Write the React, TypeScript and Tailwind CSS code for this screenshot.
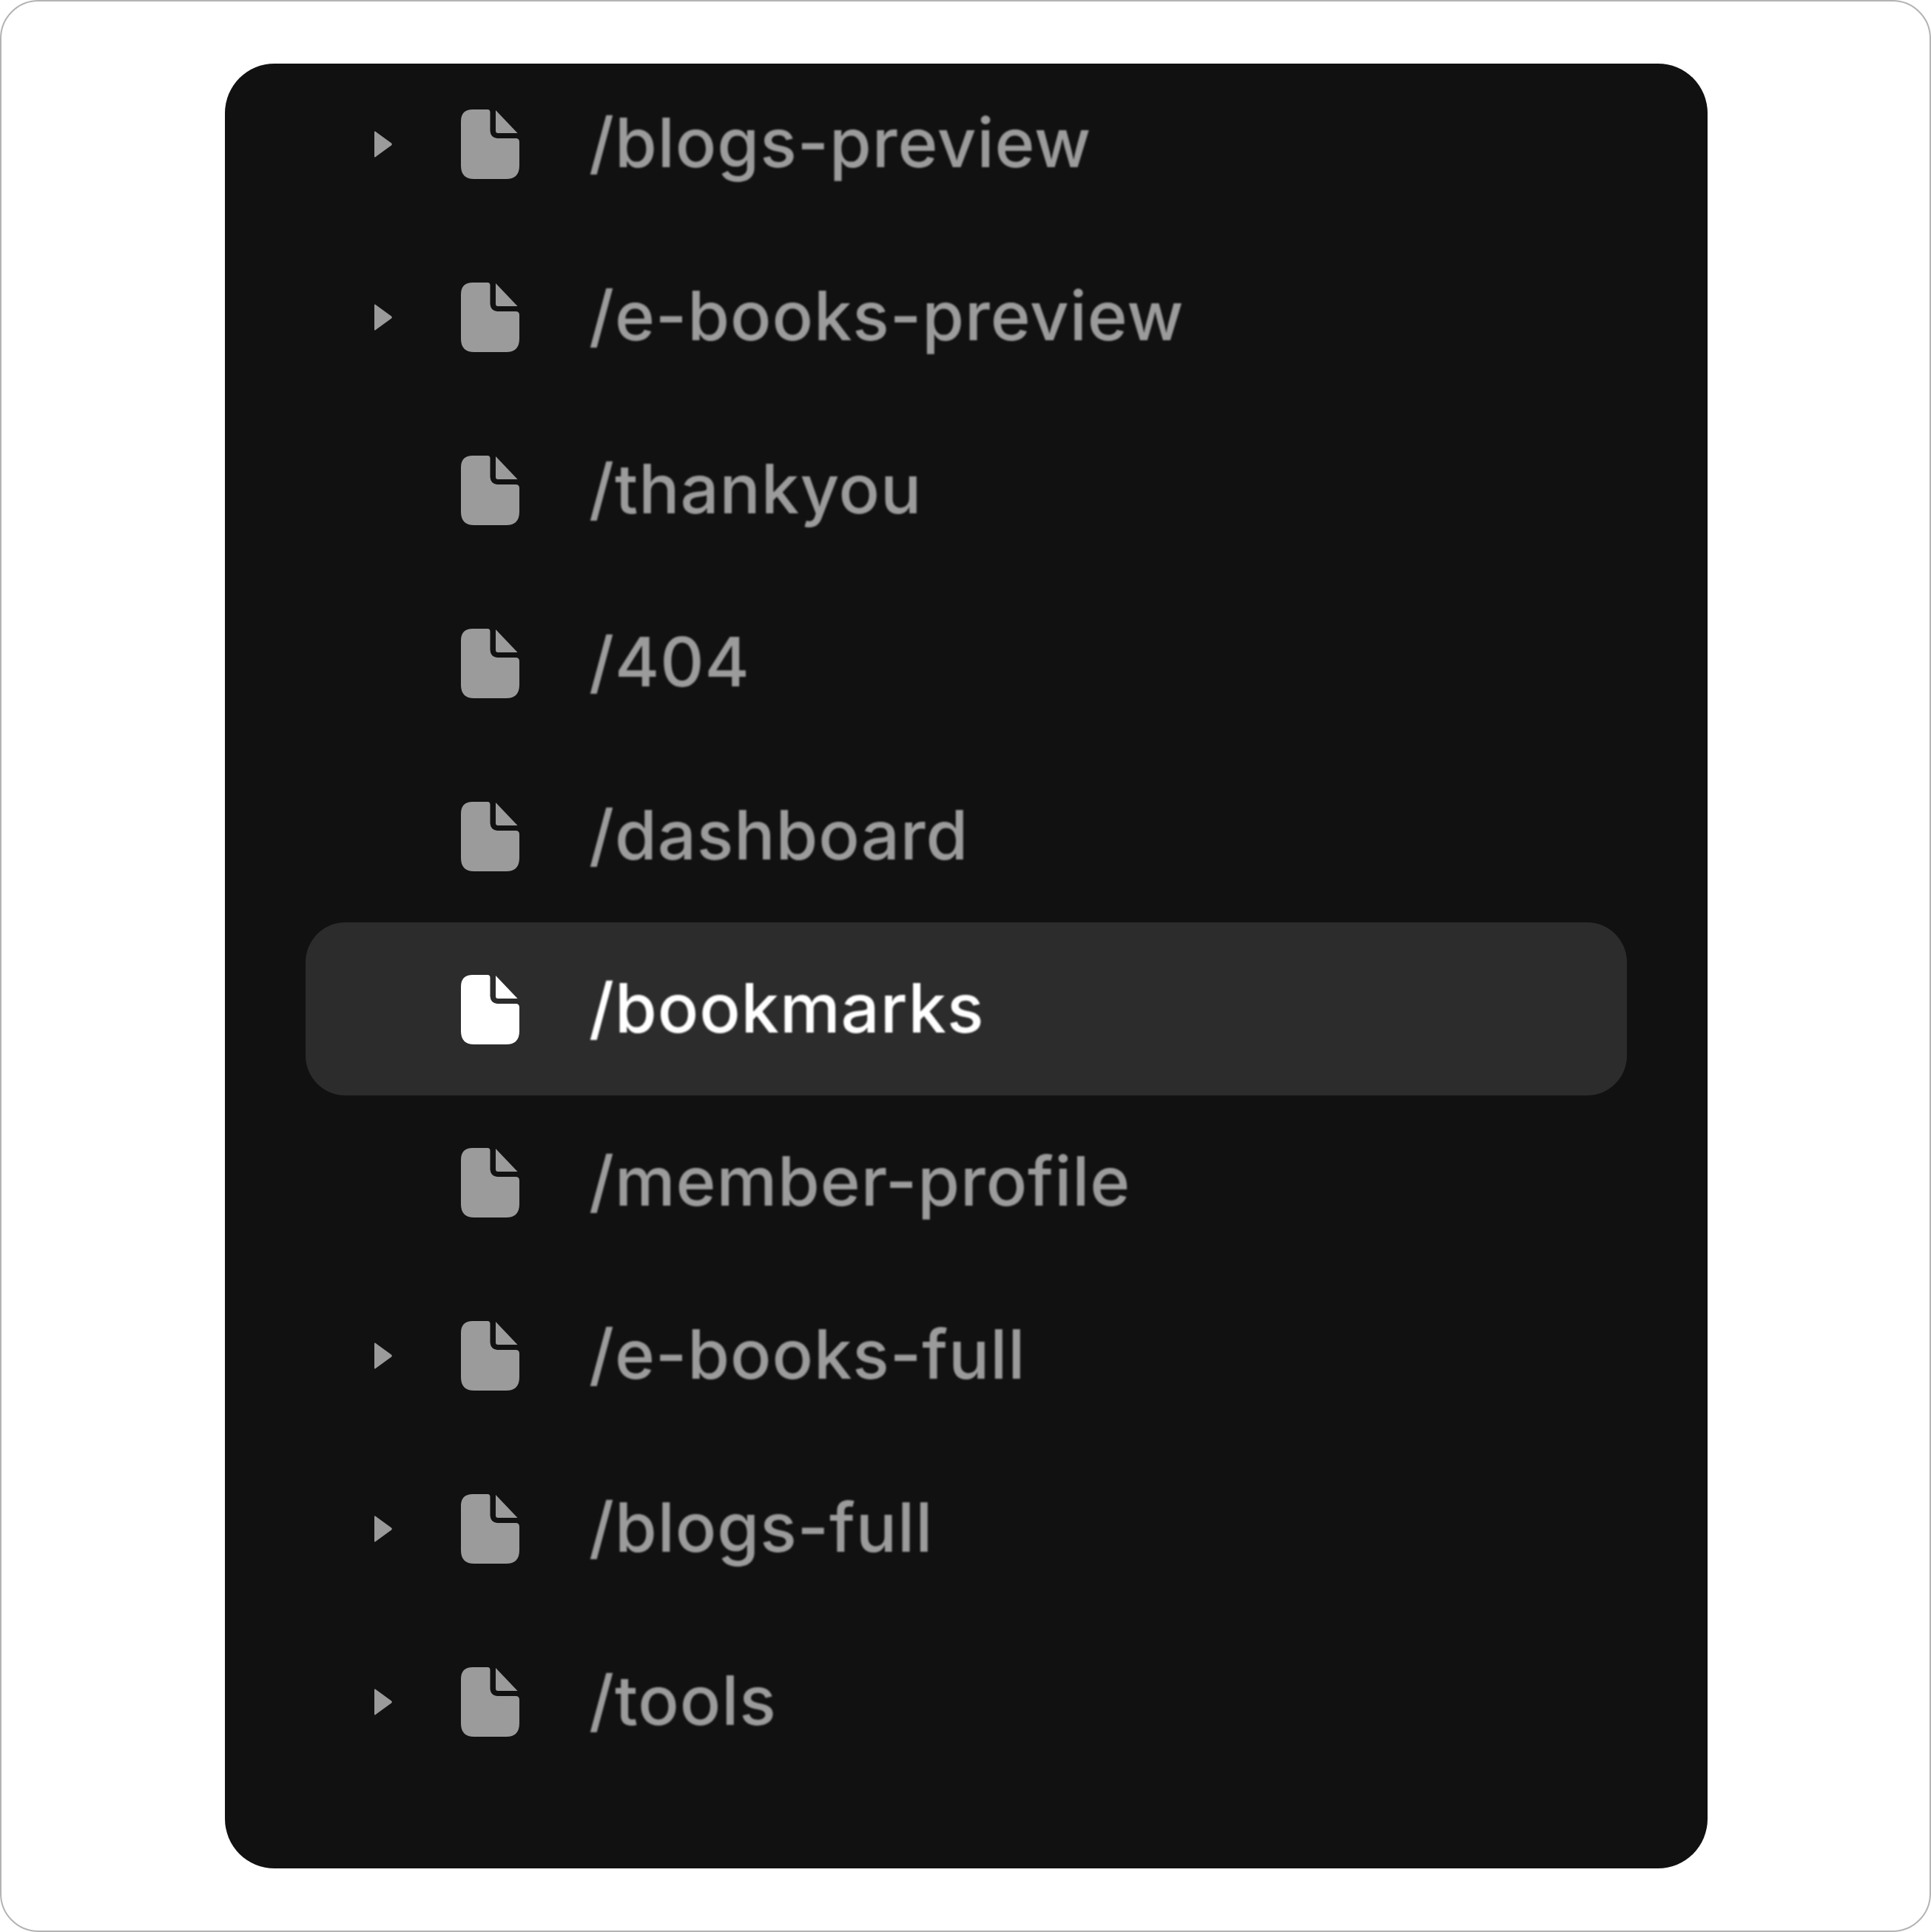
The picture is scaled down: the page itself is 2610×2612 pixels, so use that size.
const rows = [
  { path: "/blogs-preview", arrow: true },
  { path: "/e-books-preview", arrow: true },
  { path: "/thankyou", arrow: false },
  { path: "/404", arrow: false },
  { path: "/dashboard", arrow: false },
  { path: "/bookmarks", arrow: false, active: true },
  { path: "/member-profile", arrow: false },
  { path: "/e-books-full", arrow: true },
  { path: "/blogs-full", arrow: true },
  { path: "/tools", arrow: true },
];

function PageIcon() {
  return (
    <svg className="w-[79px] h-[94px] shrink-0 mt-[2px]" viewBox="0 0 79 94" fill="currentColor">
      <path d="M16 0H36Q39.5 0 39.5 4V29Q40 38 49 39H74Q79 39 79 44V76Q79 94 61 94H18Q0 94 0 76V16Q0 0 16 0Z" />
      <path d="M47 1L76.5 32H50Q47 32 47 29Z" />
    </svg>
  );
}

function Arrow() {
  return (
    <svg className="w-[24px] h-[36px]" viewBox="0 0 24 36" fill="#9b9b9b">
      <path d="M0 1.5Q0 0 1.5 0.8L23 16.5Q24.5 18 23 19.5L1.5 35.2Q0 36 0 34.5Z" />
    </svg>
  );
}

export default function App() {
  return (
    <div className="w-[2610px] h-[2612px] bg-white border-2 border-[#b3b3b3] rounded-[52px] pt-[84px] pl-[302px]">
      <div className="w-[2004px] h-[2440px] bg-[#111111] rounded-[67px] overflow-hidden px-[109px]">
        <ul className="-mt-[9px] flex flex-col font-['Inter',sans-serif]">
          {rows.map((row) => (
            <li
              key={row.path}
              className={`h-[234px] flex items-center pl-[93px] rounded-[54px] ${row.active ? "bg-[#2c2c2c] text-white" : "text-[#9b9b9b]"}`}
            >
              <span className="w-[24px] h-[36px] shrink-0 mr-[93px] mt-[2px]">{row.arrow && <Arrow />}</span>
              <PageIcon />
              <span className="ml-[94px] -mt-[2px] text-[92px] font-[450] tracking-[0.9px] leading-none blur-[0.8px]">{row.path}</span>
            </li>
          ))}
        </ul>
      </div>
    </div>
  );
}
